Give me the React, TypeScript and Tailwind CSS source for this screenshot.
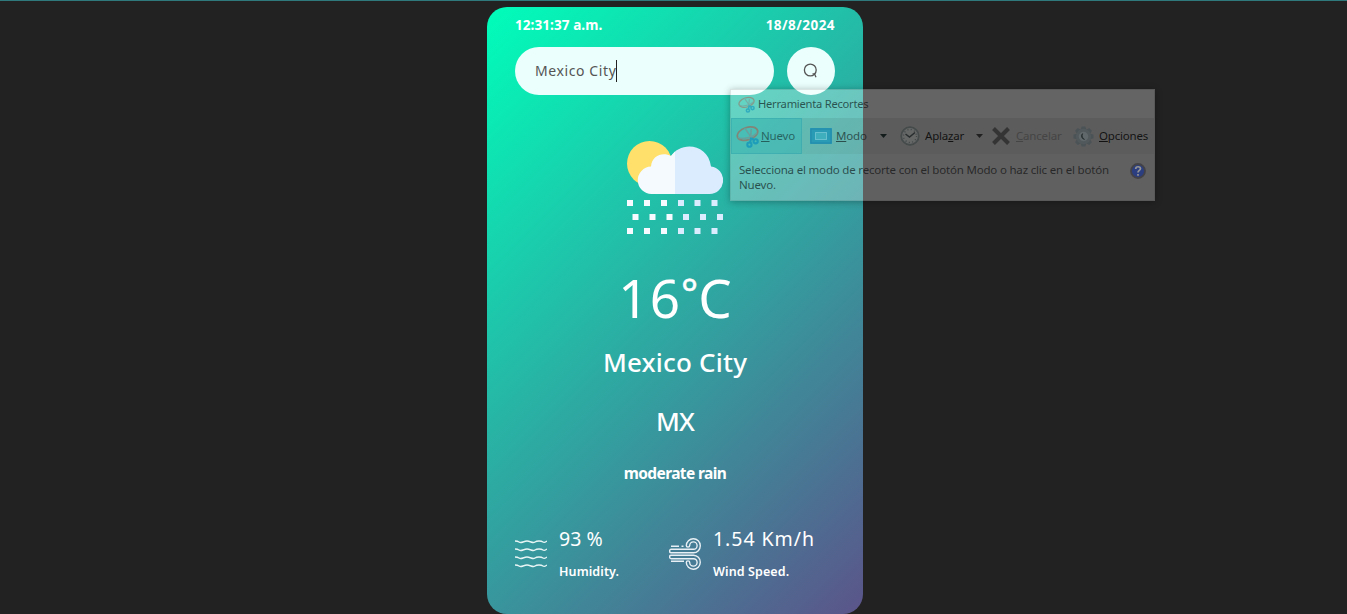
import React from 'react';

function Clip({ className }: { className: string }) {
  return (
    <svg viewBox="0 0 24 24" className={className} fill="none">
      <ellipse cx="12" cy="9" rx="11" ry="6.5" transform="rotate(-18 12 9)" stroke="#a8604f" strokeWidth="1.8" />
      <path d="M2 13C6 15 16 14 22 8M9 3l9 13M16 4l-1 12" stroke="#7f8c8c" strokeWidth="1.5" />
      <circle cx="14" cy="20.5" r="2.2" stroke="#0089be" strokeWidth="2.2" />
      <circle cx="20.5" cy="17" r="2.2" stroke="#0089be" strokeWidth="2.2" />
      <path d="M16 13l-1.5 6M16.5 14l3 2" stroke="#0089be" strokeWidth="2.2" />
    </svg>
  );
}

const gearTeeth = [0, 45, 90, 135, 180, 225, 270, 315];

function SnippingTool() {
  return (
    <div className="absolute left-[730px] top-[88px] flex h-[112px] w-[425px] flex-col border border-black/10 bg-[#ffffff4d] font-['Noto_Sans','Open_Sans',sans-serif] text-[11.5px] tracking-[-.19px] text-black/80 shadow-[0_1px_7px_rgba(0,0,0,0.3)]">
      <div className="flex h-[28px] items-center pl-[7px]">
        <Clip className="size-[17px] opacity-50" />
        <span className="ml-[3px] whitespace-nowrap text-[11.2px] leading-4 tracking-[-.25px] opacity-75">Herramienta Recortes</span>
      </div>
      <div className="flex h-[36px] items-center bg-black/[.07]">
        <div className="flex h-[36px] w-[71px] shrink-0 items-center border border-[#2e9cab60] bg-[#00b5c038] pl-[4px]">
          <Clip className="size-[23px] opacity-60" />
          <span className="ml-[2px] opacity-60"><u>N</u>uevo</span>
        </div>
        <svg className="ml-[8px] h-[16px] w-[22px] shrink-0" viewBox="0 0 22 16">
          <path fill="#2a9bb5" d="M0 0h22v16H0z" /><path d="M1 1h20v14H1z" fill="none" stroke="#2289ac" /><path d="M5.5 4.5h11v7h-11z" fill="#3faebd" stroke="#9bdbe0" strokeDasharray="1 1" />
        </svg>
        <span className="ml-[4px] w-[32px] opacity-70"><u>M</u>odo</span>
        <svg className="ml-[12px] h-1 w-[7px] shrink-0"><path d="M0 0h7L3.5 4z" fill="#141b1b" /></svg>
        <svg className="ml-[13px] size-[20px] shrink-0" viewBox="0 0 20 20" fill="none">
          <circle cx="10" cy="10" r="8.8" fill="#656767" stroke="#454a4a" strokeWidth="1.7" />
          <circle cx="10" cy="10" r="6.5" stroke="#404545" strokeWidth="1.3" strokeDasharray="1 2.4" />
          <path d="M5.5 8l4 3L15 6.5" stroke="#292d2d" strokeWidth="1.5" />
        </svg>
        <span className="ml-[5px] w-[39px]">Apla<u>z</u>ar</span>
        <svg className="ml-[12px] h-1 w-[7px] shrink-0"><path d="M0 0h7L3.5 4z" fill="#202020" /></svg>
        <svg className="ml-[9px] size-[18px] shrink-0" viewBox="0 0 18 18"><path d="M1.5 1.5l15 15m0-15l-15 15" stroke="#343434" strokeWidth="4" /></svg>
        <span className="ml-[6px] w-[46px] text-[#454545]"><u>C</u>ancelar</span>
        <svg className="ml-[11px] h-[23px] w-[21px] shrink-0" viewBox="0 0 22 24" fill="none">
          {gearTeeth.map((a) => <path key={a} d="M9 1.5h4l1 4H8z" fill="#4c5356" transform={`rotate(${a} 11 12)`} />)}
          <circle cx="11" cy="12" r="6.5" fill="#60686b" stroke="#52595c" strokeWidth="3" />
          <path d="M10 9a3.5 3.5 0 0 0 2 6 4.500 4.500 0 0 1-2-6" fill="#2a3233" stroke="#2a3233" />
        </svg>
        <span className="ml-[5px]"><u>O</u>pciones</span>
      </div>
      <div className="flex flex-1 justify-between bg-[#00002008] pl-[8px] pr-[8px] pt-[8px]">
        <p className="whitespace-nowrap leading-[15px] opacity-75">Selecciona el modo de recorte con el botón Modo o haz clic en el botón<br />Nuevo.</p>
        <svg className="mt-px size-[16px]" viewBox="0 0 16 16">
          <circle cx="8" cy="8" r="7" fill="#2b3f80" stroke="#424247" strokeWidth="1.8" />
          <path d="M5.7 6c0-3 4.8-2.8 4.8-.4C10.5 7.4 8 7.3 8 9.5M8 11v1.7" stroke="#959595" strokeWidth="1.7" fill="none" />
        </svg>
      </div>
    </div>
  );
}

const dots = [
  [0, 60, 1], [17, 60, 1], [34, 60, 1], [51, 60, 0], [67.5, 60, 0], [84.5, 60, 0],
  [5.5, 74, 1], [22.5, 74, 1], [39.5, 74, 1], [56, 74, 0], [73, 74, 0], [90, 74, 0],
  [0, 88, 1], [17, 88, 1], [34, 88, 1], [51, 88, 0], [67.5, 88, 0], [84.5, 88, 0],
];

function RainIcon() {
  return (
    <svg className="mt-[45px] h-[96px] w-[96px] shrink-0" viewBox="0 0 96 96">
      <circle cx="22.5" cy="23.5" r="22.5" fill="#ffe06a" />
      <path d="M43.5 17C53 1 81 3 84 26.500A13.800 13.800 0 0 1 82.500 54H48V15z" fill="#dbecff" />
      <path d="M48 54H25A13.7 13.7 0 0 1 24 26.5C25 15 36 12 44 16L48 11.5z" fill="#f5faff" />
      {dots.map(([x, y, w]) => <rect key={`${x}-${y}`} x={x} y={y} width="6" height="6" fill={w ? '#f7fbff' : '#dbecff'} />)}
    </svg>
  );
}

export default function App() {
  return (
    <div className="relative flex h-[614px] justify-center overflow-hidden border-t border-[#2f787b] bg-[#222] pl-[3px] font-['Noto_Sans','Open_Sans',sans-serif] text-white">
      <main className="mt-[6px] flex h-[607px] w-[376px] flex-col items-center rounded-[20px] bg-[linear-gradient(135deg,#00feba,#5b548a)] px-7">
        <div className="mt-[8px] flex h-[20px] w-full items-center justify-between text-[13.5px] font-bold leading-5">
          <span className="tracking-[.08px]">12:31:37 a.m.</span><span className="tracking-[.45px]">18/8/2024</span>
        </div>
        <div className="mt-[12px] flex w-full justify-between">
          <div className="flex h-12 w-[259px] items-center rounded-full bg-[#ebfffc] pl-5 text-[14px] tracking-[.6px] text-[#555]">
            <span className="mb-[2px]">Mexico City</span><span className="h-[22px] w-px bg-[#222]" />
          </div>
          <div className="flex size-12 items-center justify-center rounded-full bg-[#ebfffc]">
            <svg className="mb-px mr-px size-[15px]" viewBox="0 0 15 15" fill="none" stroke="#555" strokeWidth="1.3"><circle cx="7.3" cy="7" r="5.9" /><path d="M9.5 10.8h2l1.500 3.500" /></svg>
          </div>
        </div>
        <RainIcon />
        <div className="mt-[30px] h-[64px] whitespace-nowrap text-[53px] leading-[64px]"><span className="tracking-[1px]">16</span><span className="align-[10px] text-[40px] leading-none [-webkit-text-stroke:.5px_white]">°</span>C</div>
        <div className="mt-[14px] h-[36px] whitespace-nowrap text-[26px] font-medium leading-[36px] tracking-[.2px]">Mexico City</div>
        <div className="mt-[23px] h-[36px] text-[26px] font-medium leading-[36px] tracking-[-.8px]">MX</div>
        <div className="mt-[22px] h-[24px] whitespace-nowrap text-[15.5px] font-bold leading-6 tracking-[-.6px]">moderate rain</div>
        <div className="mt-[41px] flex w-full">
          <div className="flex w-[154px]">
            <svg className="mt-[12px] h-[32px] w-[32px]" viewBox="0 0 32 32" fill="none" stroke="#e8f5f5" strokeWidth="1.4">
              <path d="M0 3q2.7 0 4 1t4 0 4-1 4 1 4 0 4-1 4 1 4-1M0 11q2.7 0 4 1t4 0 4-1 4 1 4 0 4-1 4 1 4-1M0 19q2.7 0 4 1t4 0 4-1 4 1 4 0 4-1 4 1 4-1M0 27q2.7 0 4 1t4 0 4-1 4 1 4 0 4-1 4 1 4-1" />
            </svg>
            <div className="ml-[12px] whitespace-nowrap">
              <div className="h-[26px] text-[19.5px] leading-[26px]">93 %</div>
              <div className="mt-[10px] text-[12.5px] font-semibold leading-[20px] tracking-[.1px]">Humidity.</div>
            </div>
          </div>
          <div className="flex">
            <svg className="mt-[12px] h-[32px] w-[32px]" viewBox="0 0 32 32" fill="none" stroke="#e8f0f5" strokeWidth="1.4">
              <path d="M24.5 14.8a7 7 0 1 0-7.2-7.2c0 2 3.4 2 3.400 0a3.700 3.700 0 1 1 3.800 3.700H2.200c-2.200 0-2.200 3.500 0 3.500zM24.500 17.200a7 7 0 1 1-7.200 7.200c0-2 3.400-2 3.400 0a3.700 3.700 0 1 0 3.800-3.700H2.200c-2.200 0-2.200-3.500 0-3.500zM2 8.300h8M12.500 8.300h2M2 23.300h13" />
            </svg>
            <div className="ml-[12px] whitespace-nowrap">
              <div className="h-[26px] text-[19.5px] leading-[26px] tracking-[.95px]">1.54 Km/h</div>
              <div className="mt-[10px] text-[12.5px] font-semibold leading-[20px] tracking-[.1px]">Wind Speed.</div>
            </div>
          </div>
        </div>
      </main>
      <SnippingTool />
    </div>
  );
}
